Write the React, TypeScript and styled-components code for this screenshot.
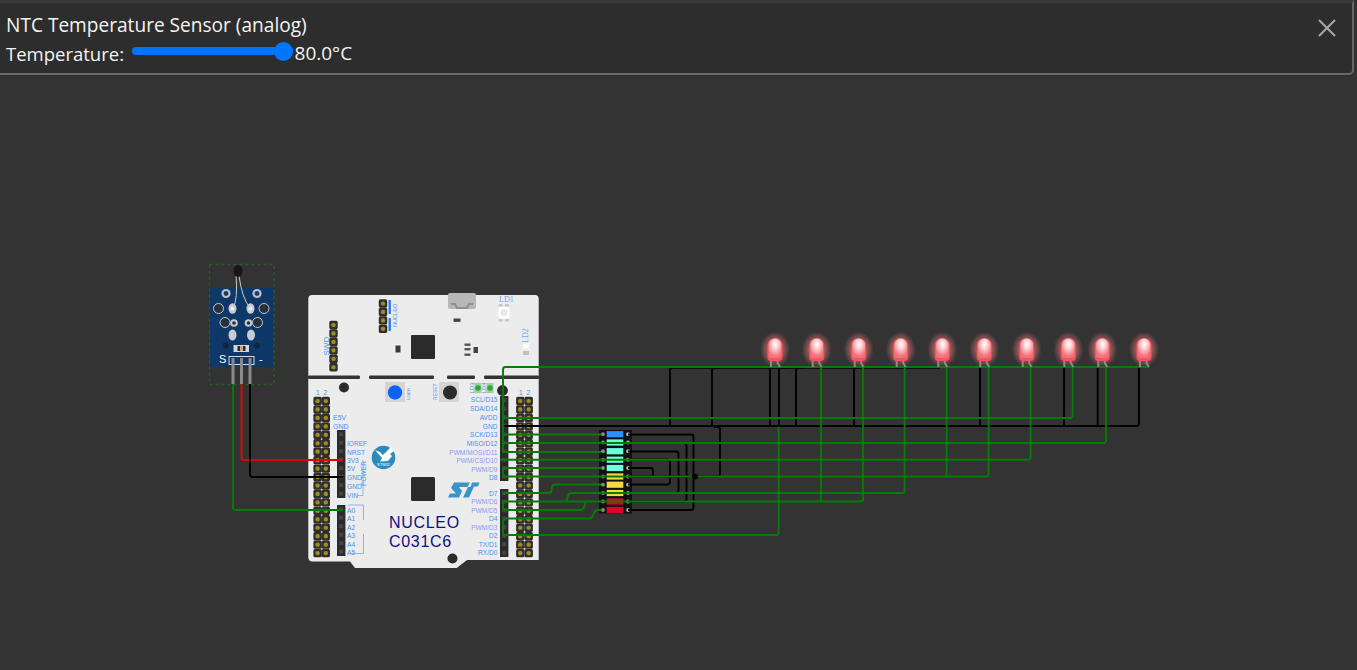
import React from "react";
import styled, { createGlobalStyle } from "styled-components";

const Global = createGlobalStyle`
  html, body { margin: 0; padding: 0; background: #333333; height: 100%; overflow: hidden; }
  #root { height: 100%; }
`;

const Page = styled.div`
  width: 1357px; height: 670px; display: flex; flex-direction: column;
  background: #333333; font-family: "Open Sans", "Noto Sans", sans-serif; color: #f4f4f4;
`;
const Panel = styled.header`
  box-sizing: border-box; width: 1354px; height: 75px; flex: none;
  background: #2d2d2d; border-top: 3px solid #3a3a3a;
  border-right: 2px solid #666666; border-bottom: 2px solid #6a6a6a;
  border-radius: 0 0 5px 0; box-shadow: 0 1px 2px rgba(40, 40, 40, 0.6);
  padding: 9px 15px 0 6px; display: flex; justify-content: space-between; align-items: flex-start;
`;
const PanelBody = styled.div`display: flex; flex-direction: column;`;
const Title = styled.div`font-size: 19.1px; line-height: 27px;`;
const Row = styled.div`display: flex; align-items: flex-start; font-size: 18.5px; line-height: 27px; margin-top: 1px;`;
const Label = styled.span`margin-right: 7.5px;`;
const Value = styled.span`font-size: 19px;`;
const Range = styled.input`
  appearance: none; -webkit-appearance: none; margin: 1px 2px 0 0; padding: 0; width: 161px; height: 19px;
  background: transparent; outline: none;
  &::-webkit-slider-runnable-track { height: 8px; border-radius: 4px; background: #0075ff; }
  &::-webkit-slider-thumb {
    -webkit-appearance: none; appearance: none; width: 19px; height: 19px; border-radius: 50%;
    background: #0075ff; margin-top: -5px; border: none;
  }
`;
const Close = styled.button`
  background: none; border: none; padding: 0; margin: 6px 0 0 0; width: 20px; height: 20px; color: #a8a8a8; display: block;
`;
const Canvas = styled.svg`display: block; flex: 1; width: 1357px; height: 595px;`;

const PinLabel = styled.text<{ $pwm?: boolean; $end?: boolean; $size?: number }>`
  font-family: "Liberation Sans", Arial, sans-serif; font-size: ${(p) => p.$size ?? 6.6}px;
  fill: ${(p) => (p.$pwm ? "#8d9cf2" : "#4692f0")};
  text-anchor: ${(p) => (p.$end ? "end" : "start")};
`;
const BoardName = styled.text`
  font-family: "Liberation Sans", Arial, sans-serif; font-size: 16px; letter-spacing: 0.7px; fill: #10107e;
`;
const SensorMark = styled.text`
  font-family: "Liberation Sans", Arial, sans-serif; font-size: 11px; fill: #ffffff;
`;
const BirdMark = styled.text`
  font-family: "Liberation Sans", Arial, sans-serif; font-size: 4px; fill: #ffffff; text-anchor: middle;
`;
const LdMark = styled.text`
  font-family: "Liberation Serif", serif; font-size: 8px; fill: #6aa6ee;
`;

const OFFSET = 75;

function wire(pts: number[][], r = 2.5): string {
  let d = `M${pts[0][0]} ${pts[0][1]}`;
  for (let i = 1; i < pts.length; i++) {
    const [x, y] = pts[i];
    if (i === pts.length - 1) { d += ` L${x} ${y}`; break; }
    const [px, py] = pts[i - 1];
    const [nx, ny] = pts[i + 1];
    const l1 = Math.hypot(x - px, y - py) || 1;
    const l2 = Math.hypot(nx - x, ny - y) || 1;
    const a = Math.min(r, l1 / 2), b = Math.min(r, l2 / 2);
    d += ` L${x - ((x - px) / l1) * a} ${y - ((y - py) / l1) * a} Q${x} ${y} ${x + ((nx - x) / l2) * b} ${y + ((ny - y) / l2) * b}`;
  }
  return d;
}

const GREEN = "#057c05";
const BLACK = "#020202";
const WIRE = 1.9;

const blackWires: number[][][] = [
  [[503, 426], [1139, 426], [1139, 367]],
  [[670, 426], [670, 367.8], [940, 367.8]],
  [[712, 426], [712, 367.8], [720, 367.8]],
  [[770, 426], [770, 367]],
  [[796, 426], [796, 367.8], [804, 367.8]],
  [[854, 426], [854, 367]],
  [[980, 426], [980, 367]],
  [[1064, 426], [1064, 367]],
  [[1097.7, 426], [1097.7, 367]],
  [[628, 434.5], [693.5, 434.5], [693.5, 510], [628, 510]],
  [[628, 443], [686.5, 443], [686.5, 501.5], [628, 501.5]],
  [[628, 451.5], [678.5, 451.5], [678.5, 493], [628, 493]],
  [[628, 459.5], [670, 459.5], [670, 484.5], [628, 484.5]],
  [[628, 468], [653, 468], [653, 476.5], [628, 476.5]],
  [[628, 476.5], [695, 476.5]],
  [[714, 427], [720, 427], [720, 476.5], [695, 476.5]],
];
const greenWires: number[][][] = [
  [[503, 452], [503, 367], [1149, 367]],
  [[503, 434.5], [601, 434.5]],
  [[503, 452], [601, 452]],
  [[503, 443], [1106, 443], [1106, 367]],
  [[503, 418], [1072.7, 418], [1072.7, 367]],
  [[500, 459.7], [1030.6, 459.7], [1030.6, 367]],
  [[601, 468], [503, 468], [503, 476.5], [988.6, 476.5], [988.6, 367]],
  [[946.6, 476.5], [946.6, 367]],
  [[503, 493], [551, 493], [552.5, 484.5], [601, 484.5]],
  [[566, 501.5], [569, 493], [904.6, 493], [904.6, 367]],
  [[503, 501.5], [863, 501.5], [863, 367]],
  [[821, 501.5], [821, 367]],
  [[503, 501.5], [503, 510], [583, 510], [586, 501.5]],
  [[601, 510], [595, 510], [592, 518.5], [503, 518.5], [503, 535], [778.7, 535], [778.7, 427]],
];

const LED_X = [775, 816.7, 858.7, 900.7, 942.3, 984.3, 1026.7, 1068.3, 1102.3, 1144];
const BAR_Y = [434.2, 442.5, 451.2, 459.7, 468, 476.5, 484.7, 493, 501.5, 510];
const BAR_C = ["#2b90ff", "#6ffedc", "#6ffedc", "#6ffedc", "#6ffedc", "#f6d93e", "#f6d93e", "#f6d93e", "#e4002b", "#e4002b"];

const leftLabels: [string, number][] = [
  ["IOREF", 446], ["NRST", 454.5], ["3V3", 463], ["5V", 471], ["GND", 480], ["GND", 488.5], ["VIN", 497.5],
  ["A0", 512.5], ["A1", 521], ["A2", 529.5], ["A3", 537.5], ["A4", 546.5], ["A5", 555],
];
const rightLabels: [string, number, boolean][] = [
  ["SCL/D15", 402, false], ["SDA/D14", 411, false], ["AVDD", 420, false], ["GND", 428.5, false],
  ["SCK/D13", 437, false], ["MISO/D12", 445.5, false], ["PWM/MOSI/D11", 454.5, true], ["PWM/CS/D10", 462.5, true],
  ["PWM/D9", 471.5, true], ["D8", 479.5, false], ["D7", 495.5, false], ["PWM/D6", 504, true], ["PWM/D5", 512.5, true],
  ["D4", 521, false], ["PWM/D3", 529.5, true], ["D2", 537.5, false], ["TX/D1", 546.5, false], ["RX/D0", 555, false],
];

const GoldPin = ({ x, y }: { x: number; y: number }) => (
  <g>
    <rect x={x - 4.2} y={y - 4.2} width={8.4} height={8.4} rx={1.6} fill="#2e2e2e" />
    <rect x={x - 2.1} y={y - 2.1} width={4.2} height={4.2} rx={1.6} fill="#a08a22" />
  </g>
);
const GoldHeader = ({ xs, y0, n, step = 8.45 }: { xs: number[]; y0: number; n: number; step?: number }) => (
  <g>
    {xs.map((x) => Array.from({ length: n }, (_, i) => <GoldPin key={`${x}-${i}`} x={x} y={y0 + i * step} />))}
  </g>
);
const Socket = ({ x, y, n }: { x: number; y: number; n: number }) => (
  <g>
    <rect x={x} y={y} width={8.4} height={n * 8.5} fill="#2a2a2a" rx={0.6} />
    {Array.from({ length: n }, (_, i) => (
      <rect key={i} x={x + 2.2} y={y + 2.2 + i * 8.5} width={4} height={4} fill="#454545" />
    ))}
  </g>
);
const Led = ({ x, i }: { x: number; i: number }) => (
  <g>
    <ellipse cx={x} cy={349.5} rx={15} ry={18} fill="url(#glow)" />
    <path d={`M${x - 4} 360V367`} stroke="#8a8a8a" strokeWidth={2} fill="none" />
    <path d={`M${x + 2.5} 360V363L${x + 5} 367`} stroke="#8a8a8a" strokeWidth={2} fill="none" />
    <path d={`M${x - 7.5} 345a7.5 7 0 0 1 15 0V357q0 4 -4 4H${x - 5}q-2.5 -1 -2.5 -3Z`} fill="#ee5660" />
    <path d={`M${x - 6.4} 345a6.4 6.4 0 0 1 12.8 0V354q0 4 -4 4H${x - 3}q-3.4 0 -3.4 -3Z`} fill="url(#shine)" />
    <title>{`LED ${i + 1}`}</title>
  </g>
);

export default function App() {
  return (
    <Page>
      <Global />
      <Panel>
        <PanelBody>
          <Title>NTC Temperature Sensor (analog)</Title>
          <Row>
            <Label>Temperature:</Label>
            <Range type="range" min={-24} max={80} step={0.1} defaultValue={80} />
            <Value>80.0°C</Value>
          </Row>
        </PanelBody>
        <Close aria-label="Close">
          <svg width="20" height="20" viewBox="0 0 20 20">
            <path d="M2 2L18 18M18 2L2 18" stroke="currentColor" strokeWidth="2" />
          </svg>
        </Close>
      </Panel>
      <Canvas viewBox={`0 ${OFFSET} 1357 595`}>
        <defs>
          <radialGradient id="glow">
            <stop offset="0%" stopColor="#ff7a7a" stopOpacity="0.9" />
            <stop offset="55%" stopColor="#ff7a7a" stopOpacity="0.5" />
            <stop offset="100%" stopColor="#ff7a7a" stopOpacity="0" />
          </radialGradient>
          <radialGradient id="shine" cx="52%" cy="30%" r="62%">
            <stop offset="0%" stopColor="#ffffff" />
            <stop offset="35%" stopColor="#ffd6d8" />
            <stop offset="100%" stopColor="#f4707a" />
          </radialGradient>
        </defs>

        {/* sensor module */}
        <rect x={209.5} y={264.5} width={64.5} height={120} fill="none" stroke="#2a5c2a" strokeWidth={1.4} strokeDasharray="3 3" />
        <rect x={210} y={287.5} width={63} height={79} fill="#0e3868" />
        {[[226, 293.5], [257, 293.5]].map(([x, y]) => (
          <g key={x}>
            <circle cx={x} cy={y} r={4.6} fill="#b9c2cc" />
            <circle cx={x} cy={y} r={2.4} fill="#1d3c62" />
          </g>
        ))}
        {[[218.5, 308.5], [264, 308.5], [225, 322.5], [257.5, 322.5]].map(([x, y]) => (
          <circle key={`${x}${y}`} cx={x} cy={y} r={5} fill="#27303e" stroke="#c8c8c8" strokeWidth={1} />
        ))}
        {[[234, 323], [248.5, 323]].map(([x, y]) => (
          <g key={x}>
            <circle cx={x} cy={y} r={3.8} fill="#c4ccd4" />
            <circle cx={x} cy={y} r={1.8} fill="#26303c" />
          </g>
        ))}
        {[[232.5, 308.5], [250.5, 308.5]].map(([x, y]) => (
          <g key={x}>
            <ellipse cx={x} cy={y} rx={4} ry={5.2} fill="#c4ccd4" />
            <circle cx={x} cy={y} r={2} fill="#f4f4f4" />
          </g>
        ))}
        {[[232.5, 335], [251, 335]].map(([x, y]) => (
          <ellipse key={x} cx={x} cy={y} rx={4} ry={5.5} fill="#c4ccd4" />
        ))}
        <circle cx={225.5} cy={345.5} r={3} fill="#10243c" />
        <circle cx={257} cy={345.5} r={3} fill="#10243c" />
        <rect x={233.5} y={345} width={15.5} height={7} fill="#cfd6dc" />
        <rect x={237.5} y={346} width={8} height={5} fill="#2a2a2a" />
        <rect x={240} y={346} width={3} height={5} fill="#c9a68a" />
        <SensorMark x={219} y={363}>S</SensorMark>
        <SensorMark x={259} y={363}>-</SensorMark>
        <path d="M236 274Q238 300 233 308M239 276Q242 298 250 308" stroke="#c4ccd4" strokeWidth={1} fill="none" />
        <ellipse cx={238} cy={271} rx={4.5} ry={6} fill="#161616" />
        <rect x={229} y={356.5} width={25} height={8} fill="#0e3868" stroke="#d4dcec" strokeWidth={1} />
        {[233, 241.5, 250].map((x) => (
          <rect key={x} x={x - 1.5} y={358} width={3} height={26} fill="#8a8a8a" />
        ))}

        {/* board */}
        <path d="M312 295H535Q538.7 295 538.7 299V560H467L456.7 568H355L350 561.5H312Q308.3 561 308.3 557V299Q308.3 295 312 295Z" fill="#ececec" />
        {[[308, 360], [369, 434], [447, 475], [484, 539]].map(([a, b]) => (
          <rect key={a} x={a} y={375.5} width={b - a} height={3.4} rx={1.2} fill="#333333" />
        ))}
        <rect x={448} y={293} width={28} height={16} rx={2} fill="#b7b7b7" />
        <path d="M451 304H455L457 308H467L469 304H473" stroke="#8e8e8e" strokeWidth={2} fill="none" />
        <rect x={411} y={335} width={24} height={24} rx={1} fill="#2b2b2b" />
        <rect x={395.5} y={345.5} width={5} height={7} fill="#3a3a3a" />
        <rect x={453.5} y={318.5} width={7} height={3.4} fill="#444" />
        <rect x={464.5} y={343.5} width={6} height={2.4} fill="#555" />
        <rect x={464.5} y={348} width={6} height={2.4} fill="#555" />
        <rect x={464.5} y={353.5} width={6} height={2.4} fill="#555" />
        <rect x={473.5} y={347} width={4.5} height={6} fill="#444" />
        <rect x={411} y={477} width={24} height={24} rx={1.5} fill="#2b2b2b" />
        <rect x={498.5} y={304} width={4} height={2.5} fill="#c8c8c8" />
        <rect x={505} y={304} width={4} height={2.5} fill="#c8c8c8" />
        <rect x={498.5} y={319} width={4} height={2.5} fill="#c8c8c8" />
        <rect x={505} y={319} width={4} height={2.5} fill="#c8c8c8" />
        <rect x={498.5} y={307} width={11} height={11.5} rx={2} fill="#ffffff" />
        <circle cx={504} cy={312.5} r={3.6} fill="#e8e8e8" />
        <LdMark x={499} y={302}>LD1</LdMark>
        <LdMark x={0} y={0} transform="translate(528 343) rotate(-90)">LD2</LdMark>
        <rect x={523} y={343.5} width={6} height={5} fill="#fbfbfb" />
        <rect x={523} y={351} width={6} height={4} fill="#c0c0c0" />

        <GoldHeader xs={[333.5]} y0={325} n={6} />
        <GoldHeader xs={[383]} y0={303.5} n={4} />
        <rect x={388.5} y={300} width={2.4} height={14} fill="#2a7bf0" />
        <rect x={388.5} y={318} width={2.4} height={13} fill="#2a7bf0" />
        <PinLabel $size={5.6} x={0} y={0} transform="translate(397 327) rotate(-90)">NUCLEO</PinLabel>
        <PinLabel $size={8} x={0} y={0} transform="translate(329 355.5) rotate(-90)">SWD</PinLabel>

        <rect x={385} y={382} width={20} height={20} rx={1} fill="#d4d4d4" />
        <circle cx={395} cy={392.5} r={7.2} fill="#0b63f6" />
        <PinLabel $size={4.4} x={0} y={0} transform="translate(410 400) rotate(-90)">USER</PinLabel>
        <rect x={439} y={382} width={20} height={20} rx={1} fill="#d4d4d4" />
        <circle cx={450} cy={392.5} r={7} fill="#2b2b2b" />
        <PinLabel $size={5} x={0} y={0} transform="translate(437 400) rotate(-90)">RESET</PinLabel>
        <rect x={474.5} y={383} width={7} height={10} fill="#9fcf9f" />
        <circle cx={478} cy={388} r={2.8} fill="#3aa23a" />
        <rect x={486.5} y={383} width={7} height={10} fill="#9fcf9f" />
        <circle cx={490} cy={388} r={2.8} fill="#3aa23a" />
        <PinLabel $size={6} x={0} y={0} transform="translate(474 393.5) rotate(-90)">LD3</PinLabel>
        <PinLabel $size={6} x={0} y={0} transform="translate(486 393.5) rotate(-90)">LD4</PinLabel>
        <circle cx={344} cy={387.5} r={5} fill="#2b2b2b" />
        <circle cx={502.5} cy={390.5} r={5.4} fill="#2b2b2b" />
        <circle cx={452.5} cy={558.5} r={5} fill="#2b2b2b" />

        <PinLabel x={316} y={395}>1</PinLabel>
        <PinLabel x={323.5} y={395}>2</PinLabel>
        <PinLabel x={519} y={395}>1</PinLabel>
        <PinLabel x={526.5} y={395}>2</PinLabel>
        <GoldHeader xs={[317.6, 325.8]} y0={401} n={19} />
        <GoldHeader xs={[520.3, 528.7]} y0={401} n={19} />
        <Socket x={337} y={430} n={8} />
        <Socket x={337} y={505} n={6} />
        <Socket x={500} y={396} n={10} />
        <Socket x={500} y={489} n={8} />

        <PinLabel $size={7} x={333} y={419.5}>E5V</PinLabel>
        <PinLabel $size={7} x={333} y={428.5}>GND</PinLabel>
        {leftLabels.map(([t, y]) => <PinLabel key={`${t}${y}`} x={347} y={y}>{t}</PinLabel>)}
        {rightLabels.map(([t, y, p]) => <PinLabel key={t} $end $pwm={p} x={497.5} y={y}>{t}</PinLabel>)}
        <PinLabel x={0} y={0} transform="translate(366 486) rotate(-90)">POWER</PinLabel>
        <path d="M357 495.5H363V460M348 505H363.5V520M363.5 534V553.5H348" stroke="#7fb0ee" strokeWidth={0.9} fill="none" />

        <circle cx={383.5} cy={457.5} r={11.8} fill="#2c8bbd" />
        <path d="M375 450L380 452L383 455L391 447L394 451L390 454L392 456L388 461L380 461.5L382 458Z" fill="#ffffff" />
        <BirdMark x={383.5} y={465.5}>STM32</BirdMark>
        <path d="M454 482.5H470L467.5 487H459L462 491L459 497.5H448L450 493.5H456L451 488Z" fill="#3a94c8" />
        <path d="M472 482.5H479.5L478 486.5H474L469 497.5H463L468 487H470.5Z" fill="#3a94c8" />
        <BoardName x={389} y={528}>NUCLEO</BoardName>
        <BoardName x={389} y={547}>C031C6</BoardName>

        {/* LED bar */}
        <rect x={599} y={430} width={33} height={83.5} fill="#111" />
        {BAR_Y.map((y, i) => (
          <g key={y}>
            <rect x={606.7} y={y - 3.1} width={16.6} height={6.2} fill={BAR_C[i]} />
            <circle cx={603} cy={y} r={1.9} fill="#8a8a8a" />
            <circle cx={628} cy={y} r={1.9} fill="#b0b0b0" />
          </g>
        ))}

        {/* wires */}
        <path d={wire([[233, 384], [233, 510], [343, 510]])} stroke={GREEN} strokeWidth={WIRE} fill="none" />
        <path d={wire([[241.5, 384], [241.5, 460], [343, 460]])} stroke="#dc0808" strokeWidth={WIRE} fill="none" />
        {greenWires.slice(13).map((w, i) => <path key={`g${i}`} d={wire(w)} stroke={GREEN} strokeWidth={WIRE} fill="none" />)}
        {blackWires.map((w, i) => <path key={i} d={wire(w)} stroke={BLACK} strokeWidth={WIRE} fill="none" />)}
        <path d={wire([[779, 426], [779, 367.8], [790, 367.8]])} stroke={BLACK} strokeWidth={WIRE} fill="none" />
        <path d={wire([[250, 384], [250, 477], [343, 477]])} stroke={BLACK} strokeWidth={WIRE} fill="none" />
        {greenWires.slice(0, 13).map((w, i) => <path key={i} d={wire(w)} stroke={GREEN} strokeWidth={WIRE} fill="none" />)}
        <circle cx={695} cy={476.5} r={3} fill="#020202" />

        {LED_X.map((x, i) => <Led key={x} x={x} i={i} />)}
      </Canvas>
    </Page>
  );
}
